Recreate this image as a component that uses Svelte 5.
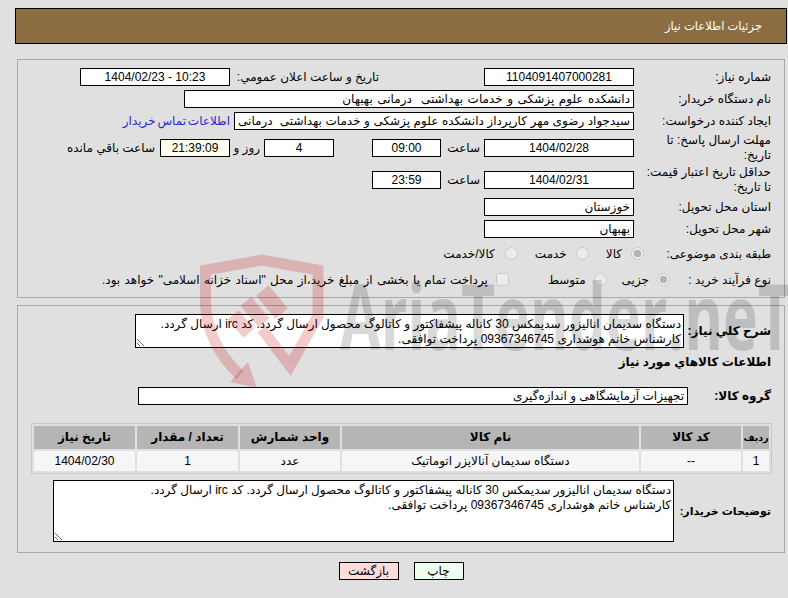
<script>
  const need = 'دستگاه سدیمان انالیزور سدیمکس 30 کاناله پیشفاکتور و کاتالوگ محصول ارسال گردد. کد irc ارسال گردد.\nکارشناس خانم هوشداری 09367346745 پرداخت توافقی.';
</script>

<div class="page">
  <header class="bar">جزئیات اطلاعات نیاز</header>

  <section class="panel top">
    <div class="row">
      <span class="label w137">شماره نیاز:</span>
      <input class="w150 c" readonly value="1104091407000281" />
      <span class="label announce">تاریخ و ساعت اعلان عمومي:</span>
      <input class="w150 c" readonly value="1404/02/23 - 10:23" />
    </div>
    <div class="row">
      <span class="label w137">نام دستگاه خریدار:</span>
      <input class="w450 wide" readonly value="دانشکده علوم پزشکی و خدمات بهداشتی  درمانی بهبهان" />
    </div>
    <div class="row">
      <span class="label w137">ایجاد کننده درخواست:</span>
      <input class="w400 mid" readonly value="سیدجواد رضوی مهر کارپرداز دانشکده علوم پزشکی و خدمات بهداشتی  درمانی بهبهان" />
      <a class="link" href="#contact">اطلاعات تماس خریدار</a>
    </div>
    <div class="row tall">
      <span class="label w137">مهلت ارسال پاسخ: تا تاریخ:</span>
      <input class="w150 c" readonly value="1404/02/28" />
      <span class="unit hour">ساعت</span>
      <input class="w69 c" readonly value="09:00" />
      <input class="w70 c days" readonly value="4" />
      <span class="unit and">روز و</span>
      <input class="w70 c timer" readonly value="21:39:09" />
      <span class="remain">ساعت باقي مانده</span>
    </div>
    <div class="row tall">
      <span class="label w137">حداقل تاریخ اعتبار قیمت: تا تاریخ:</span>
      <input class="w150 c" readonly value="1404/02/31" />
      <span class="unit hour">ساعت</span>
      <input class="w69 c" readonly value="23:59" />
    </div>
    <div class="row">
      <span class="label w137">استان محل تحویل:</span>
      <input class="w150" readonly value="خوزستان" />
    </div>
    <div class="row">
      <span class="label w137">شهر محل تحویل:</span>
      <input class="w150" readonly value="بهبهان" />
    </div>
    <div class="row opts cat">
      <span class="label lcat">طبقه بندی موضوعی:</span>
      <span class="radio on"></span><span class="opt o1">کالا</span>
      <span class="radio"></span><span class="opt o2">خدمت</span>
      <span class="radio"></span><span class="opt o5">کالا/خدمت</span>
    </div>
    <div class="row opts kind">
      <span class="label lkind">نوع فرآیند خرید :</span>
      <span class="radio on"></span><span class="opt o3">جزیی</span>
      <span class="radio"></span><span class="opt o4">متوسط</span>
      <span class="check"></span><span class="opt note">پرداخت تمام یا بخشی از مبلغ خرید،از محل "اسناد خزانه اسلامی" خواهد بود.</span>
    </div>
  </section>

  <section class="panel bottom">
    <div class="row desc">
      <span class="label strong w87">شرح کلي نیاز:</span>
      <textarea class="t1" readonly value={need}></textarea>
    </div>
    <h2 class="strong heading">اطلاعات کالاهاي مورد نیاز</h2>
    <div class="row group">
      <span class="label strong w83">گروه کالا:</span>
      <input class="w550" readonly value="تجهیزات آزمایشگاهی و اندازه‌گیری" />
    </div>
    <table>
      <colgroup>
        <col class="k1" /><col class="k2" /><col class="k3" /><col class="k4" /><col class="k5" /><col class="k5" />
      </colgroup>
      <thead>
        <tr><th class="tiny">ردیف</th><th>کد کالا</th><th>نام کالا</th><th>واحد شمارش</th><th>تعداد / مقدار</th><th>تاریخ نیاز</th></tr>
      </thead>
      <tbody>
        <tr><td>1</td><td>--</td><td>دستگاه سدیمان آنالایزر اتوماتیک</td><td>عدد</td><td>1</td><td>1404/02/30</td></tr>
      </tbody>
    </table>
    <div class="row buyer">
      <span class="label strong w97 fit">توضیحات خریدار:</span>
      <textarea class="t2" readonly value={need}></textarea>
    </div>
  </section>

  <div class="actions">
    <button class="print">چاپ</button>
    <button class="back">بازگشت</button>
  </div>

  <svg class="mark" viewBox="0 0 788 598" aria-hidden="true">
    <g class="shield">
      <path class="band" d="M262 329 L290 366 L318 316 V270 L262 260 L205.5 270 V305 Q208 345 240 375" />
      <path d="M248 362 L257 388 L230 382 Z" />
      <rect x="-8" y="-15" width="16" height="30" transform="translate(272 302) rotate(-40)" />
      <rect x="-7" y="-14" width="14" height="28" transform="translate(255 312) rotate(-40)" />
      <rect x="-7" y="-12" width="14" height="24" transform="translate(241 324) rotate(-40)" />
    </g>
    <text x="340" y="350" textLength="452" lengthAdjust="spacingAndGlyphs">AriaTender.neT</text>
  </svg>
</div>

<style>
  :global(body) {
    margin: 0;
    background: #e0e0e0;
    overflow: hidden;
  }
  .page {
    position: relative;
    width: 788px;
    height: 598px;
    box-sizing: border-box;
    padding: 8px 1px 0 15px;
    direction: rtl;
    color: #000;
    font: 12px/15px "Liberation Sans", "DejaVu Sans", sans-serif;
  }
  .bar {
    box-sizing: border-box;
    height: 36px;
    padding: 1px 24px 0 0;
    border: 1px solid #000;
    background: #8c6d42;
    color: #fff;
    line-height: 33px;
    font-size: 11.5px;
  }
  .panel {
    box-sizing: border-box;
    width: 768px;
    margin: 0 2px 0 0;
    border: 1px solid #a8a8a8;
    padding: 8px 13px 0 0;
  }
  .top {
    display: flex;
    flex-direction: column;
    gap: 4px;
    height: 239px;
    margin-top: 15px;
  }
  .bottom {
    height: 248px;
    margin-top: 7px;
  }
  .row {
    display: flex;
    align-items: center;
    min-height: 18px;
  }
  .tall { height: 28px; }
  .label {
    flex: none;
    box-sizing: border-box;
    line-height: 15px;
  }
  .strong { white-space: nowrap; }
  .w137 { width: 137px; padding-left: 4px; }
  .w87 { width: 87px; }
  .w83 { width: 83px; }
  .w97 { width: 97px; }
  .fit { font-size: 11px; }
  .announce { width: 149px; margin-right: 105px; }
  input {
    flex: none;
    box-sizing: border-box;
    height: 18px;
    margin: 0;
    padding: 0 3px;
    border: 1px solid #000;
    border-radius: 0;
    background: #fff;
    color: #000;
    font: inherit;
    outline: none;
    direction: rtl;
    text-align: right;
  }
  .c { text-align: center; direction: ltr; }
  .w150 { width: 150px; }
  .w450 { width: 450px; }
  .w400 { width: 400px; }
  .w70 { width: 70px; }
  .w69 { width: 69px; }
  .w550 { width: 550px; }
  .wide { word-spacing: 1.2px; }
  .mid { word-spacing: 0.2px; }
  .link {
    margin-right: 4px;
    color: #2a2acc;
    text-decoration: none;
    word-spacing: -1.5px;
  }
  .unit { flex: none; box-sizing: border-box; }
  .hour { width: 43px; padding-right: 4px; }
  .days { margin-right: 38px; }
  .and { width: 34px; padding-right: 4px; }
  .timer { background: #fffff0; }
  .remain { margin-right: 5px; }
  .cat { height: 24px; }
  .kind { height: 20px; }
  .radio, .check {
    flex: none;
    box-sizing: border-box;
    width: 13px;
    height: 13px;
    border: 1px solid #c8c8c8;
    border-radius: 50%;
    background: #ececec;
    position: relative;
    top: -1px;
  }
  .radio.on { background: radial-gradient(circle, #b4b4b4 0 3.5px, #ececec 4px); }
  .check { border-radius: 3px; }
  .opt { margin-right: 8px; flex: none; }
  .note { word-spacing: 1px; }
  .lcat { width: 127px; }
  .lkind { width: 101px; }
  .o1 { margin-right: 9px; margin-left: 17px; }
  .o2 { margin-right: 9px; margin-left: 17px; }
  .o3 { margin-left: 15px; }
  .o4 { margin-left: 39px; }
  .o5 { margin-right: 10px; }
  .strong { font-weight: 700; }
  .desc { height: 34px; }
  textarea {
    flex: none;
    box-sizing: border-box;
    margin: 0;
    padding: 2px;
    border: 1px solid #000;
    border-radius: 0;
    background: #fff;
    color: #000;
    font: inherit;
    outline: none;
    direction: rtl;
  }
  .t1 { width: 549px; height: 34px; }
  .t2 { width: 621px; height: 62px; margin-right: 0; }
  .heading {
    margin: 5px 0 0;
    height: 18px;
    font-size: 12px;
    line-height: 18px;
  }
  .group { margin-top: 16px; }
  table {
    table-layout: fixed;
    width: 741px;
    height: 51px;
    margin: 18px -1px 0 0;
    border: 1px solid #c6c6c6;
    border-spacing: 2px;
  }
  col.k1 { width: 26px; }
  col.k2 { width: 100px; }
  col.k3 { width: 297px; }
  col.k4 { width: 100px; }
  col.k5 { width: 101px; }
  th, td { padding: 0; text-align: center; font-size: 12px; }
  th { height: 23px; background: #b5b5b5; font-weight: 700; white-space: nowrap; }
  th.tiny { font-size: 9.5px; }
  td { height: 20px; background: #f6f6f6; }
  .buyer { margin-top: 6px; }
  .actions {
    display: flex;
    justify-content: center;
    gap: 15px;
    margin-top: 9px;
  }
  button {
    box-sizing: border-box;
    height: 18px;
    padding: 0;
    border: 1px solid #000;
    border-radius: 0;
    color: #000;
    font: inherit;
    line-height: 15px;
  }
  .print { width: 50px; background: #efffef; }
  .back { width: 60px; background: #ffdcdc; }
  .mark {
    position: absolute;
    inset: 0;
    width: 788px;
    height: 598px;
    pointer-events: none;
    direction: ltr;
  }
  .shield { fill: #c00000; fill-opacity: 0.2; }
  .band {
    fill: none;
    stroke: #c00000;
    stroke-opacity: 0.2;
    stroke-width: 11;
  }
  text {
    fill: #000;
    fill-opacity: 0.15;
    font: 700 92px "Open Sans", sans-serif;
  }
</style>
